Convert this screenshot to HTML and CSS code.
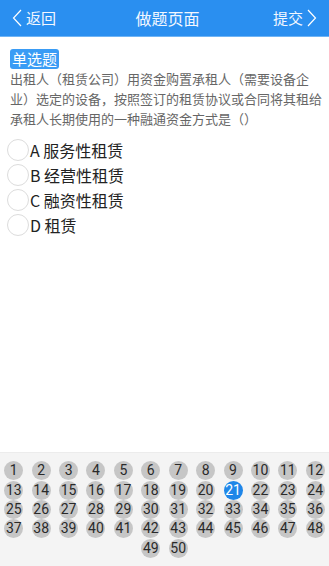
FILE: index.html
```html
<!DOCTYPE html>
<html lang="zh">
<head>
<meta charset="utf-8">
<title>做题页面</title>
<link rel="stylesheet" href="styles.css">
</head>
<body>
<div class="page">
  <header class="topbar">
    <div class="nav-btn">
      <svg class="chev" width="10" height="18" viewBox="0 0 10 18"><path d="M9 1 L1.5 9 L9 17" fill="none" stroke="#fff" stroke-width="1.2"/></svg>
      <span>返回</span>
    </div>
    <div class="title">做题页面</div>
    <div class="nav-btn">
      <span>提交</span>
      <svg class="chev" width="10" height="18" viewBox="0 0 10 18"><path d="M1 1 L8.5 9 L1 17" fill="none" stroke="#fff" stroke-width="1.2"/></svg>
    </div>
  </header>

  <main class="content">
    <div class="badge">单选题</div>
    <p class="question">出租人（租赁公司）用资金购置承租人（需要设备企业）选定的设备，按照签订的租赁协议或合同将其租给承租人长期使用的一种融通资金方式是（）</p>
    <ul class="options">
      <li class="option"><span class="radio"></span><span>A 服务性租赁</span></li>
      <li class="option"><span class="radio"></span><span>B 经营性租赁</span></li>
      <li class="option"><span class="radio"></span><span>C 融资性租赁</span></li>
      <li class="option"><span class="radio"></span><span>D 租赁</span></li>
    </ul>
  </main>

  <footer class="panel">
    <div class="cell"><span class="num">1</span></div>
    <div class="cell"><span class="num">2</span></div>
    <div class="cell"><span class="num">3</span></div>
    <div class="cell"><span class="num">4</span></div>
    <div class="cell"><span class="num">5</span></div>
    <div class="cell"><span class="num">6</span></div>
    <div class="cell"><span class="num">7</span></div>
    <div class="cell"><span class="num">8</span></div>
    <div class="cell"><span class="num">9</span></div>
    <div class="cell"><span class="num">10</span></div>
    <div class="cell"><span class="num">11</span></div>
    <div class="cell"><span class="num">12</span></div>
    <div class="cell"><span class="num">13</span></div>
    <div class="cell"><span class="num">14</span></div>
    <div class="cell"><span class="num">15</span></div>
    <div class="cell"><span class="num">16</span></div>
    <div class="cell"><span class="num">17</span></div>
    <div class="cell"><span class="num">18</span></div>
    <div class="cell"><span class="num">19</span></div>
    <div class="cell"><span class="num">20</span></div>
    <div class="cell"><span class="num active">21</span></div>
    <div class="cell"><span class="num">22</span></div>
    <div class="cell"><span class="num">23</span></div>
    <div class="cell"><span class="num">24</span></div>
    <div class="cell"><span class="num">25</span></div>
    <div class="cell"><span class="num">26</span></div>
    <div class="cell"><span class="num">27</span></div>
    <div class="cell"><span class="num">28</span></div>
    <div class="cell"><span class="num">29</span></div>
    <div class="cell"><span class="num">30</span></div>
    <div class="cell"><span class="num">31</span></div>
    <div class="cell"><span class="num">32</span></div>
    <div class="cell"><span class="num">33</span></div>
    <div class="cell"><span class="num">34</span></div>
    <div class="cell"><span class="num">35</span></div>
    <div class="cell"><span class="num">36</span></div>
    <div class="cell"><span class="num">37</span></div>
    <div class="cell"><span class="num">38</span></div>
    <div class="cell"><span class="num">39</span></div>
    <div class="cell"><span class="num">40</span></div>
    <div class="cell"><span class="num">41</span></div>
    <div class="cell"><span class="num">42</span></div>
    <div class="cell"><span class="num">43</span></div>
    <div class="cell"><span class="num">44</span></div>
    <div class="cell"><span class="num">45</span></div>
    <div class="cell"><span class="num">46</span></div>
    <div class="cell"><span class="num">47</span></div>
    <div class="cell"><span class="num">48</span></div>
    <div class="cell"><span class="num">49</span></div>
    <div class="cell"><span class="num">50</span></div>
  </footer>
</div>
</body>
</html>
```

FILE: styles.css
```css
* { box-sizing: border-box; }
html, body {
  margin: 0;
  padding: 0;
  height: 100%;
}
body {
  font-family: "Noto Sans CJK SC", "Noto Sans", sans-serif;
  background: #fff;
  color: #222;
}
.page {
  height: 566px;
  display: flex;
  flex-direction: column;
}
.topbar {
  height: 37px;
  flex: none;
  background: #2a8ff0;
  color: #f2f7ff;
  display: flex;
  align-items: center;
  justify-content: space-between;
  padding: 0 12px 0 12px;
  border-bottom: 1px solid #6fb4f5;
}
.nav-btn {
  display: flex;
  align-items: center;
  gap: 4px;
  font-size: 15px;
  line-height: 20px;
}
.chev { display: block; }
.title {
  font-size: 16px;
  line-height: 20px;
  margin-left: 6px;
}
.content {
  padding: 12px 5px 0 10px;
}
.badge {
  width: fit-content;
  height: 20px;
  line-height: 20px;
  padding: 0 2px;
  font-size: 15px;
  color: #fff;
  background: #3a9cf5;
  border-radius: 3px;
}
.question {
  margin: 0;
  font-size: 13px;
  line-height: 20px;
  color: #666;
}
.options {
  list-style: none;
  margin: 8px 0 0 -3px;
  padding: 0;
}
.option {
  display: flex;
  align-items: center;
  height: 25px;
  font-size: 16px;
  line-height: 20px;
  color: #222;
  gap: 1px;
}
.radio {
  width: 22px;
  height: 22px;
  border: 1px solid #dcdcdc;
  border-radius: 50%;
  flex: none;
}
.panel {
  margin-top: auto;
  background: #f4f4f4;
  border-top: 1px solid #ececec;
  padding: 8px 0 8px;
  display: flex;
  flex-wrap: wrap;
  justify-content: center;
}
.cell {
  width: calc(100% / 12);
  height: 19.4px;
  display: flex;
  align-items: center;
  justify-content: center;
}
.num {
  width: 19px;
  height: 19px;
  flex: none;
  border-radius: 50%;
  background: #c6c6c6;
  color: #2a2a2a;
  font-family: Roboto, "Noto Sans", sans-serif;
  font-size: 14px;
  line-height: 19px;
  text-align: center;
}
.num.active {
  background: #1f86e8;
  color: #fff;
}
```
